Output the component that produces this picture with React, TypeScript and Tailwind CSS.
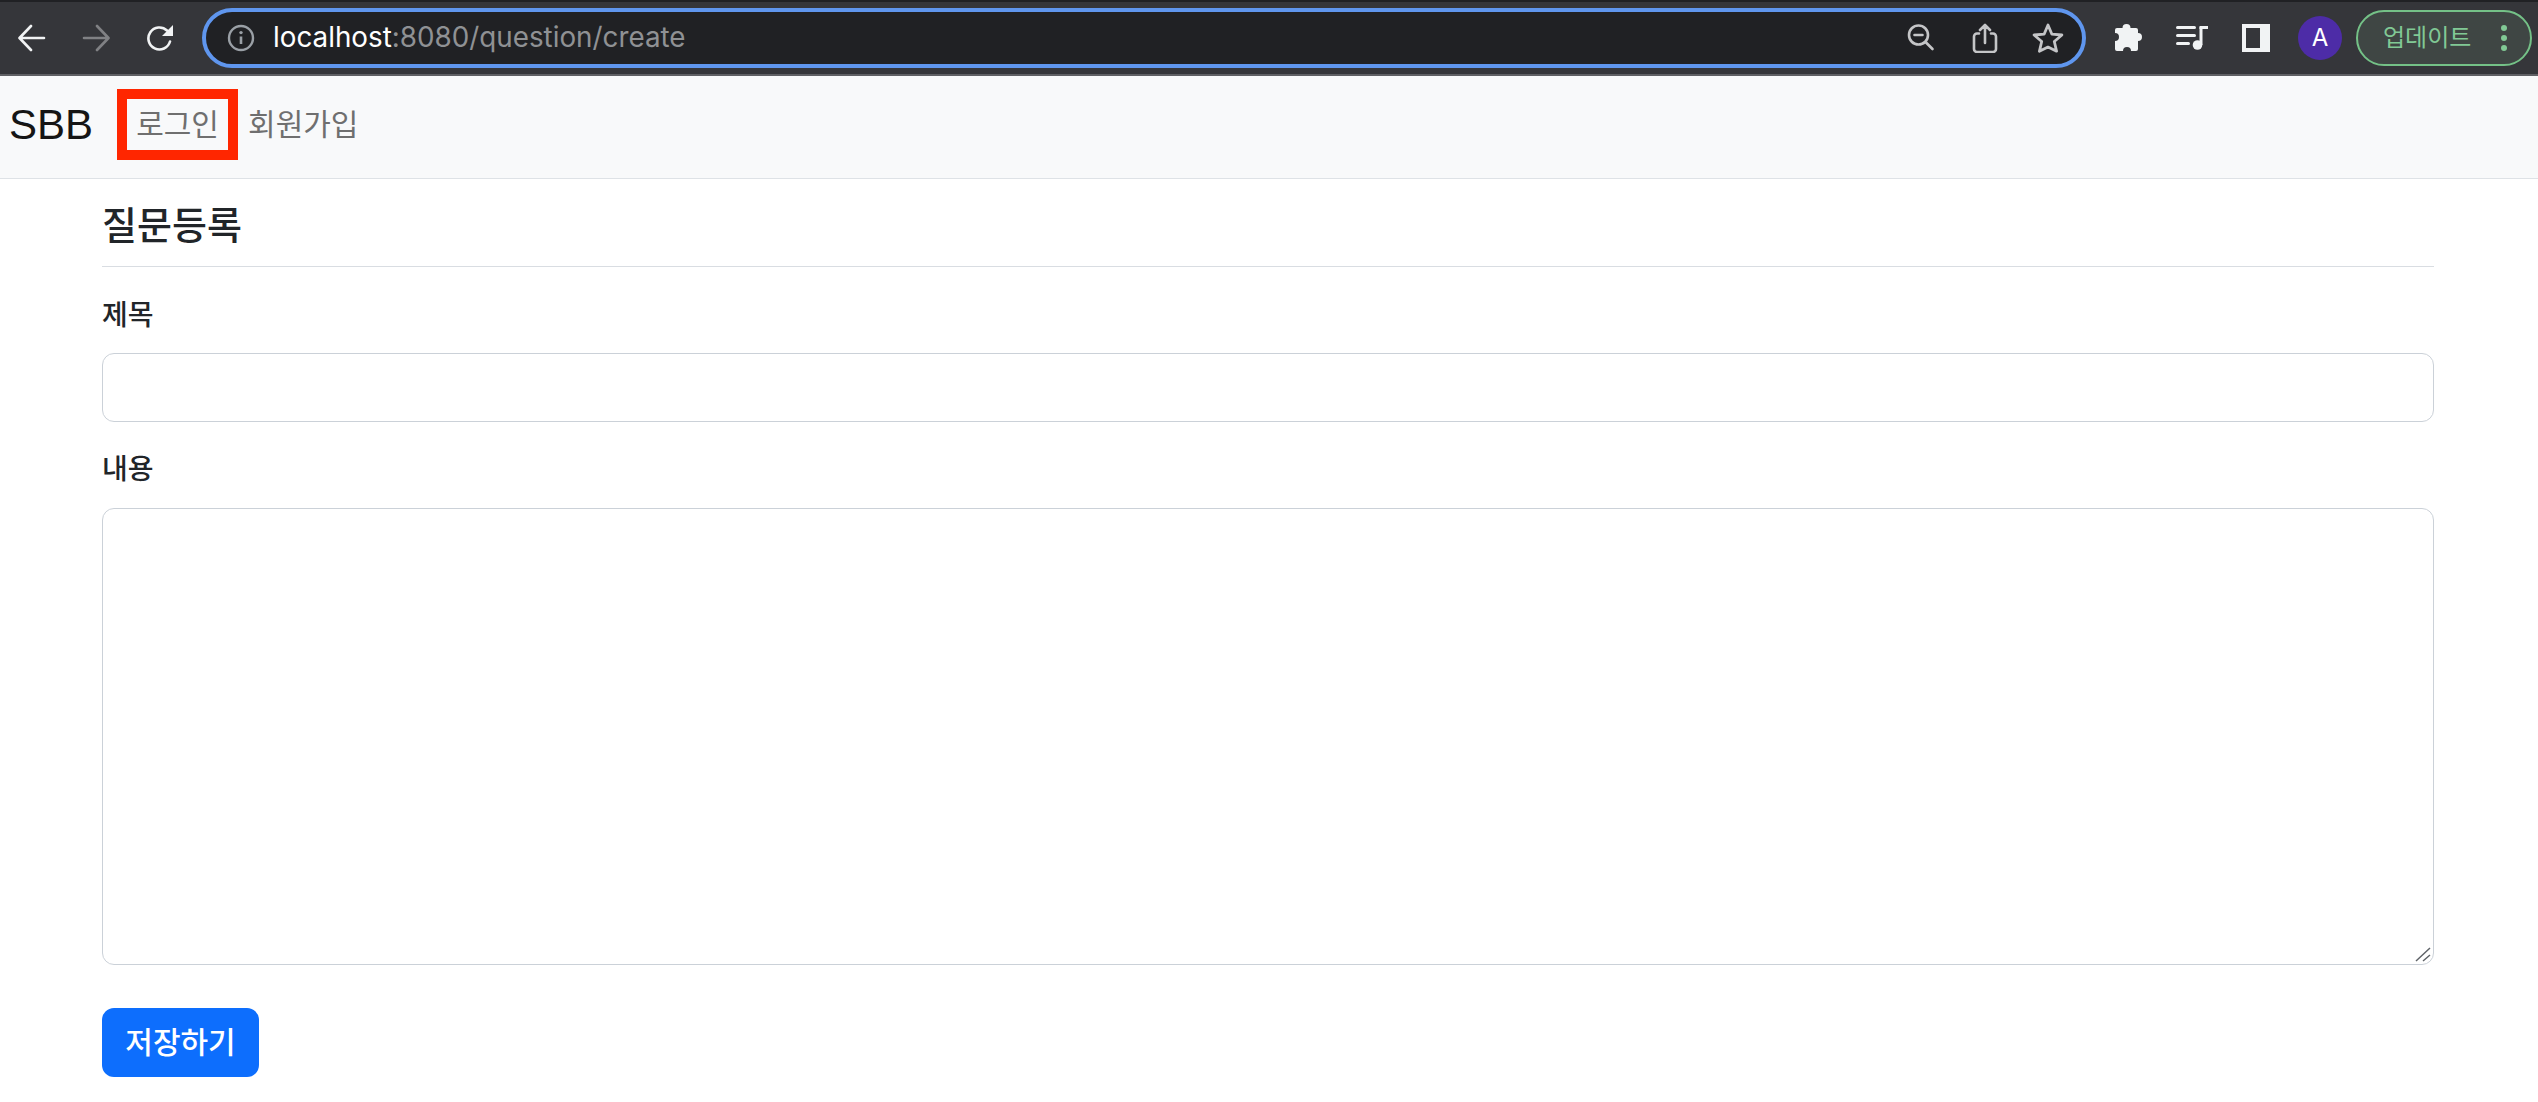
import React from "react";

const cjk = "font-['Inter','Noto_Sans_CJK_KR','Noto_Sans',sans-serif]";

function Toolbar() {
  return (
    <div className="flex h-[72px] items-center bg-[#35363a] pl-[18px] pr-[6px]">
      <svg width="28" height="28" viewBox="0 0 28 28" fill="none" stroke="#f1f3f4" strokeWidth="2.6" strokeLinecap="round" strokeLinejoin="round" className="shrink-0">
        <path d="M26 14H2M13 2 1.500 14 13 26" />
      </svg>
      <svg width="28" height="28" viewBox="0 0 28 28" fill="none" stroke="#808184" strokeWidth="2.6" strokeLinecap="round" strokeLinejoin="round" className="ml-[36px] shrink-0">
        <path d="M2 14h24M15 2l11.500 12L15 26" />
      </svg>
      <svg width="28" height="28" viewBox="0 0 28 28" fill="none" className="ml-[36px] shrink-0">
        <path d="M24 17.500A11 11 0 1 1 21 6.500" stroke="#f1f3f4" strokeWidth="2.6" strokeLinecap="round" />
        <path d="M27 1v11H16z" fill="#f1f3f4" />
      </svg>
      <div className="ml-[28px] flex h-[60px] w-[1884px] shrink-0 items-center rounded-full border-4 border-[#5f96ee] bg-[#202124] pl-[21px] pr-[18px]">
        <svg width="28" height="28" viewBox="0 0 28 28" fill="none" className="shrink-0">
          <circle cx="14" cy="14" r="12" stroke="#9aa0a6" strokeWidth="2.4" />
          <path d="M14 12.500V20" stroke="#9aa0a6" strokeWidth="2.6" />
          <circle cx="14" cy="8.600" r="1.700" fill="#9aa0a6" />
        </svg>
        <div className="ml-[18px] flex-1 whitespace-nowrap font-['Inter',sans-serif] text-[27.8px] leading-none">
          <span className="text-white">localhost</span>
          <span className="text-[#8f9194]">:8080/question/create</span>
        </div>
        <svg width="30" height="30" viewBox="0 0 30 30" fill="none" stroke="#c4c5c7" strokeWidth="2.6" strokeLinecap="round" className="shrink-0">
          <circle cx="12.500" cy="12" r="9.500" />
          <path d="M8.500 12h8M19.500 19l7 7" />
        </svg>
        <svg width="26" height="30" viewBox="0 0 26 30" fill="none" stroke="#c4c5c7" strokeWidth="2.6" strokeLinecap="round" strokeLinejoin="round" className="ml-[36px] shrink-0">
          <path d="M7 10.500H5a3 3 0 0 0-3 3V26a3 3 0 0 0 3 3h16a3 3 0 0 0 3-3V13.500a3 3 0 0 0-3-3h-2M13 20V2M8 7l5-5 5 5" />
        </svg>
        <svg width="32" height="32" viewBox="0 0 32 32" fill="none" stroke="#c4c5c7" strokeWidth="2.8" strokeLinejoin="round" className="ml-[34px] shrink-0">
          <path d="m16 3 3.900 9.200 10 .8-7.600 6.500 2.300 9.700L16 25.100 7.400 29.200l2.300-9.700L2.100 13l10-.8z" />
        </svg>
      </div>
      <svg width="30" height="30" viewBox="0 0 30 30" className="ml-[28px] shrink-0">
        <path d="M3 5h5.500a4 4 0 1 1 8 0H22a2 2 0 0 1 2 2v3a4 4 0 1 1 0 8v8a2 2 0 0 1-2 2h-5a4 4 0 0 0-8 0H3a2 2 0 0 1-2-2v-8a4 4 0 0 0 0-8V7a2 2 0 0 1 2-2z" fill="#f1f3f4" />
      </svg>
      <svg width="32" height="30" viewBox="0 0 32 30" fill="none" className="ml-[32px] shrink-0">
        <path d="M1.500 4.500h17M1.500 12.500h17M1.500 20.500h11" stroke="#f1f3f4" strokeWidth="3" strokeLinecap="round" />
        <path d="M25 4v18" stroke="#f1f3f4" strokeWidth="3" />
        <path d="M23.500 3h8.500v3h-8.500z" fill="#f1f3f4" />
        <circle cx="21.500" cy="22" r="4.800" fill="#f1f3f4" />
      </svg>
      <div className="ml-[34px] flex h-[28px] w-[28px] shrink-0 items-stretch border-4 border-[#f1f3f4]">
        <div className="ml-auto w-[6px] bg-[#f1f3f4]" />
      </div>
      <div className="ml-[28px] flex h-[44px] w-[44px] shrink-0 items-center justify-center rounded-full bg-[#4d2ca7] font-['Inter',sans-serif] text-[24px] text-white">A</div>
      <div className={`ml-[14px] flex h-[56px] w-[176px] shrink-0 items-center rounded-full border-2 border-[#74c187] bg-[#3f4644] pl-[25px] pr-[23px] text-[24px] text-[#81c995] ${cjk}`}>
        <span className="flex-1 whitespace-nowrap">업데이트</span>
        <div className="flex flex-col gap-[4px]">
          <div className="h-[6px] w-[6px] rounded-full bg-[#81c995]" />
          <div className="h-[6px] w-[6px] rounded-full bg-[#81c995]" />
          <div className="h-[6px] w-[6px] rounded-full bg-[#81c995]" />
        </div>
      </div>
    </div>
  );
}

function Navbar() {
  return (
    <div className={`flex h-[103px] items-center border-b border-[#dee2e6] bg-[#f8f9fa] pb-[5px] pl-[9px] ${cjk}`}>
      <span className="font-['Liberation_Sans',sans-serif] text-[42px] leading-none text-[#151515]">SBB</span>
      <div className="relative ml-[24px] flex h-[71px] w-[121px] shrink-0 items-center justify-center border-[10px] border-[#ff2600]">
        <span className="whitespace-nowrap text-[30px] text-[#6f6f6f]">로그인</span>
      </div>
      <span className="ml-[10px] whitespace-nowrap text-[30px] text-[#6f6f6f]">회원가입</span>
    </div>
  );
}

function Form() {
  return (
    <div className={`w-full bg-white pl-[102px] pr-[104px] text-[#212529] ${cjk}`}>
      <div className="flex h-[88px] items-center border-b border-[#d9dde2] pt-[4px]">
        <h5 className="text-[38px] font-medium leading-none">질문등록</h5>
      </div>
      <div className="flex h-[86px] items-center pt-[10px]">
        <label className="text-[28px] font-medium leading-none">제목</label>
      </div>
      <div className="h-[69px] rounded-[12px] border border-[#cbd1d8] bg-white" />
      <div className="flex h-[86px] items-center pt-[8px]">
        <label className="text-[28px] font-medium leading-none">내용</label>
      </div>
      <div className="relative h-[457px] rounded-[12px] border border-[#cbd1d8] bg-white">
        <svg width="18" height="18" viewBox="0 0 18 18" className="absolute bottom-[2px] right-[2px]" fill="none" stroke="#5f6368" strokeWidth="1.500">
          <path d="M3 17 17 4M10 17l7-6" />
        </svg>
      </div>
      <button className="mt-[43px] flex h-[69px] w-[157px] items-center justify-center rounded-[12px] bg-[#0d6efd] text-[30px] font-medium text-white">
        저장하기
      </button>
    </div>
  );
}

export default function App() {
  return (
    <div className="flex min-h-[1102px] w-[2538px] flex-col bg-white">
      <div className="h-[2px] bg-[#202124]" />
      <Toolbar />
      <div className="h-[2px] bg-[#5f6064]" />
      <Navbar />
      <Form />
    </div>
  );
}
